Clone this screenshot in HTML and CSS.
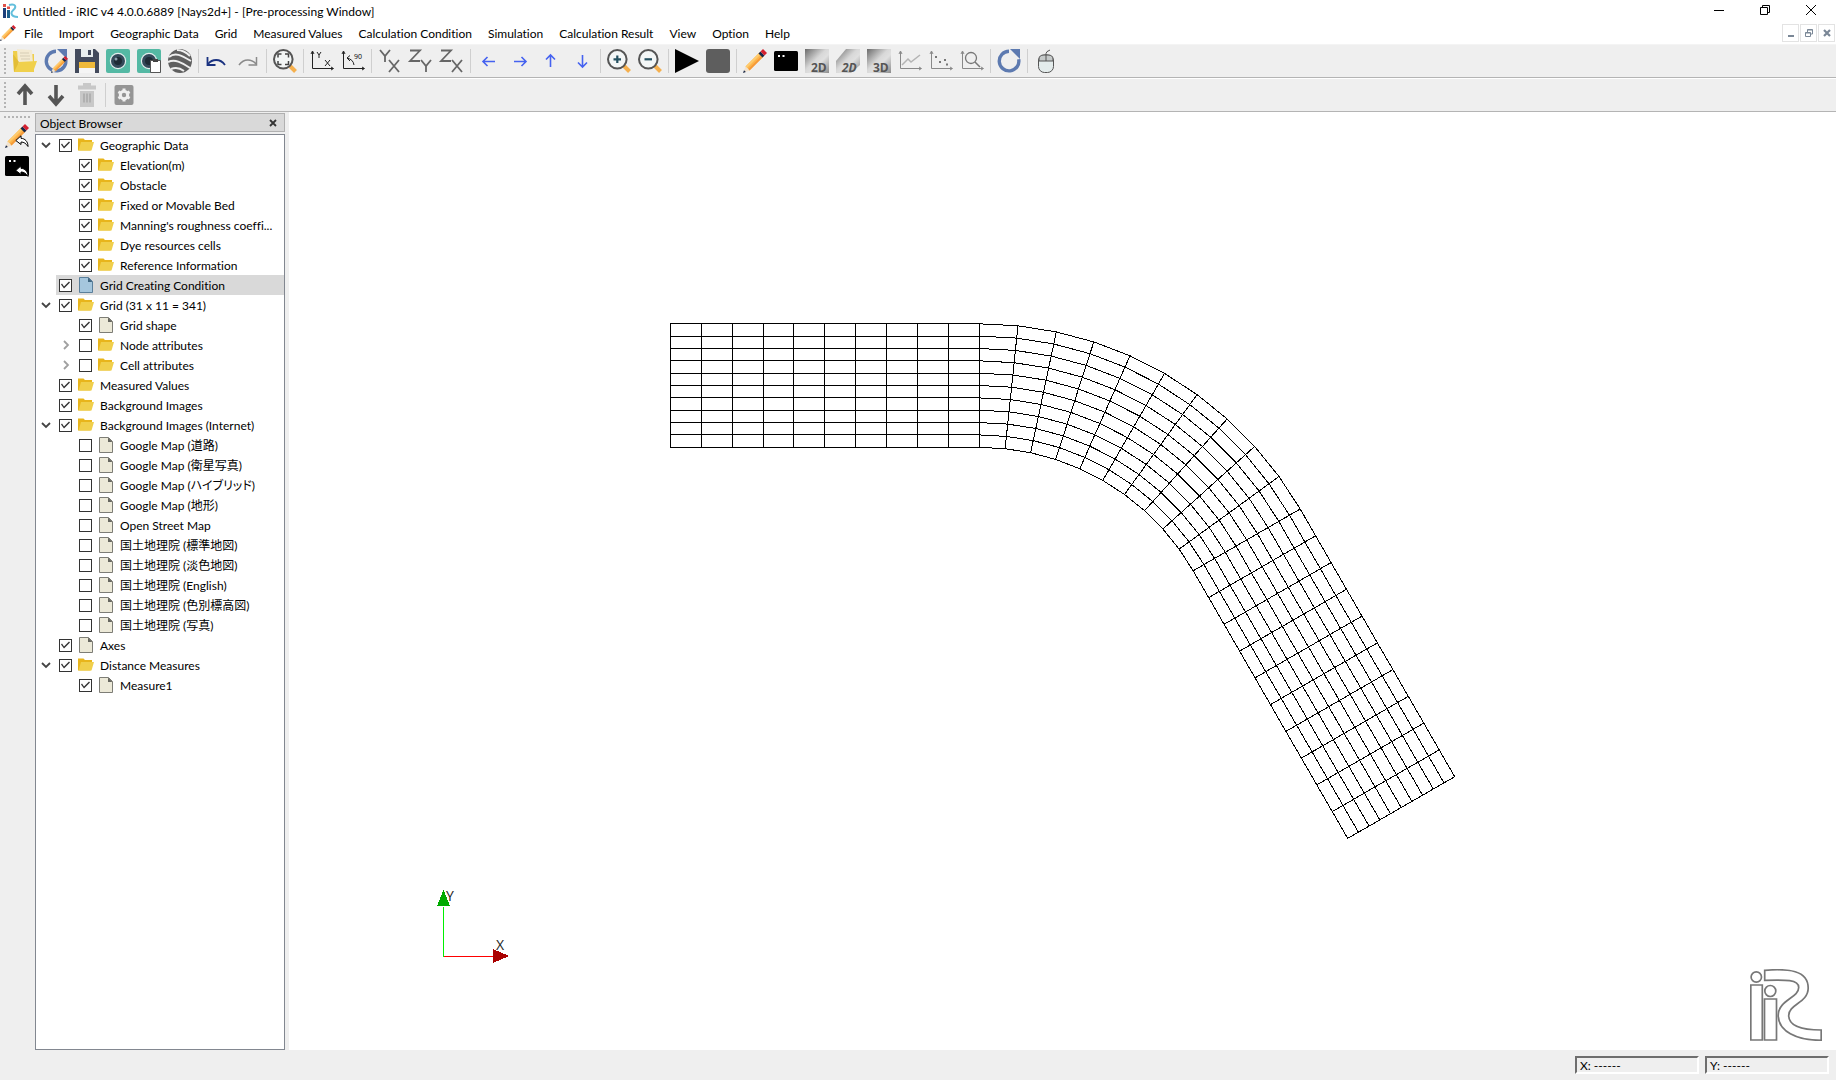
FILE: index.html
```html
<!DOCTYPE html>
<html lang="en">
<head>
    <meta charset="utf-8">
    <title>Untitled - iRIC v4 4.0.0.6889 [Nays2d+] - [Pre-processing Window]</title>
    <link rel="stylesheet" href="styles.css">
</head>
<body>
    <!-- Shared icon shapes -->
    <svg class="sprites" aria-hidden="true">
        <linearGradient id="silver" x1="0" y1="0" x2="1" y2="1">
            <stop offset="0" stop-color="#6a6a6a"/>
            <stop offset=".45" stop-color="#d8d8d8"/>
            <stop offset=".6" stop-color="#e0e0e0"/>
            <stop offset="1" stop-color="#8c8c8c"/>
        </linearGradient>
        <symbol id="folder" viewBox="0 0 16 16">
            <path d="M0 1.500h5.500l1.500 1.500h7v3H0z" fill="#e8b51c"/>
            <path d="M0 5v8.500h12.500L14 6z" fill="#e8b51c"/>
            <path d="M3 5h13L13.500 13.500H0.500z" fill="#f0cf4c"/>
        </symbol>
        <symbol id="page" viewBox="0 0 16 16">
            <path d="M1.500 .5h9l4 4v11h-13z" fill="#ece9d8" stroke="#7d7d76"/>
            <path d="M10 .5v4.500h4.500z" fill="#66665f"/>
        </symbol>
        <symbol id="bluepage" viewBox="0 0 16 16">
            <path d="M1.500 .5h9l4 4v11h-13z" fill="#a5c6dd" stroke="#5a7f9b"/>
            <path d="M10 .5v4.500h4.500z" fill="#3f6580"/>
        </symbol>
        <symbol id="down" viewBox="0 0 10 10">
            <path d="M1 3l4 4 4-4" fill="none" stroke="#444" stroke-width="1.800"/>
        </symbol>
        <symbol id="right" viewBox="0 0 10 10">
            <path d="M3 1l4 4-4 4" fill="none" stroke="#a0a0a0" stroke-width="1.800"/>
        </symbol>
        <symbol id="pencil" viewBox="0 0 24 24">
            <path d="M2.500 17.500L16.500 3.500l4 4L6.500 21.500z" fill="#fdb44b"/>
            <path d="M2.500 17.500L16.500 3.500l1.500 1.500L4 19z" fill="#fecb6e"/>
            <path d="M5.200 20.200l14-14 1.300 1.300-14 14z" fill="#f59a3a"/>
            <path d="M2.500 17.500l4 4L0 24z" fill="#f1e3cf"/>
            <path d="M1 21.200L0 24l2.900-1z" fill="#17284a"/>
            <path d="M15.500 4.500l2-2 4 4-2 2z" fill="#17284a"/>
            <path d="M17.500 2.500L20 0l4 4-2.500 2.500z" fill="#d4202f"/>
        </symbol>
        <symbol id="axes" viewBox="0 0 24 24">
            <path d="M2.500 3v16.500H23M1 5l1.500-3L4 5M21 18l2.500 1.500L21 21" fill="none" stroke="currentColor"/>
        </symbol>
        <symbol id="reply" viewBox="0 0 14 12">
            <path d="M6 .8L.8 5.500 6 9.500V7c3 0 5 1.500 7 4.500C13 6.500 10 3.500 6 3.300z" fill="#fff" stroke="#000"/>
        </symbol>
        <symbol id="console" viewBox="0 0 24 24">
            <rect y="2" width="24" height="20" rx="1.500"/>
            <path d="M4 6h2v2H4zM8.500 6h2v2h-2z" fill="#fff"/>
        </symbol>
        <symbol id="lens" viewBox="0 0 24 24">
            <path d="M16.500 16.500l6 6" stroke="#f5b04e" stroke-width="4"/>
            <circle cx="10.300" cy="10.300" r="9.300" fill="#f3f6f6" stroke="#555" stroke-width="2"/>
        </symbol>
        <symbol id="arrow" viewBox="0 0 24 24">
            <path d="M6 12.500h12M10.500 8L6 12.500l4.500 4.500" fill="none" stroke="#4562f0" stroke-width="1.600"/>
        </symbol>
        <symbol id="bigarrow" viewBox="0 0 24 24">
            <path d="M12 22V4M5 11l7-8 7 8" fill="none" stroke="#555" stroke-width="3.600"/>
        </symbol>
    </svg>

    <header class="titlebar">
        <svg class="app-icon" viewBox="0 0 16 16">
            <path d="M1 5h3v10H1z" fill="#1c3f7a"/>
            <path d="M5 7h3v8H5z" fill="#1c5f8c"/>
            <path d="M1 1h3v3H1zM5 3.500h3v2.500H5z" fill="#e0524a"/>
            <path d="M7 2c5-1.500 7 .5 6 3-1 2-4 3-3.500 5.500.5 2.500 3 3.500 6.500 3.500" fill="none" stroke="#63bfdc" stroke-width="2"/>
        </svg>
        <h1 class="title">Untitled - iRIC v4 4.0.0.6889 [Nays2d+] - [Pre-processing Window]</h1>
        <div class="window-buttons">
            <button aria-label="Minimize"><svg viewBox="0 0 10 10"><path d="M0 5.500h10" stroke="#000"/></svg></button>
            <button aria-label="Restore"><svg viewBox="0 0 10 10"><path d="M.5 2.500h7v7h-7zM2.500 2.500v-2h7v7h-2" fill="none" stroke="#000"/></svg></button>
            <button aria-label="Close"><svg viewBox="0 0 10 10"><path d="M0 0l10 10M10 0L0 10" stroke="#000"/></svg></button>
        </div>
    </header>

    <nav class="menubar">
        <svg class="mdi-icon"><use href="#pencil"/></svg>
        <div class="menus">
            <button>File</button>
            <button>Import</button>
            <button>Geographic Data</button>
            <button>Grid</button>
            <button>Measured Values</button>
            <button>Calculation Condition</button>
            <button>Simulation</button>
            <button>Calculation Result</button>
            <button>View</button>
            <button>Option</button>
            <button>Help</button>
        </div>
        <div class="mdi-buttons">
            <button aria-label="Minimize window"><svg viewBox="0 0 8 8"><path d="M1 6h6v2H1z" fill="#7a8796"/></svg></button>
            <button aria-label="Restore window"><svg viewBox="0 0 8 8"><path d="M.5 3.500h5v4h-5zM.5 4h5M2.500 3V.5h5v4.500H6M2.500 1h5" fill="none" stroke="#7a8796"/></svg></button>
            <button aria-label="Close window"><svg viewBox="0 0 8 8"><path d="M1 1l6 6M7 1L1 7" stroke="#7a8796" stroke-width="2.200"/></svg></button>
        </div>
    </nav>

    <div class="toolbar">
        <span class="handle"></span>
        <button aria-label="Open">
            <svg viewBox="0 0 24 24"><path d="M0 2h7l2 3h12v18H1z" fill="#efce4a"/><path d="M4 0l15 1 1 14H5z" fill="#f3ead2"/><path d="M7 4h9M7 7h10M8 10h9" stroke="#d6cdb5"/><path d="M6 13l18-1-4 11H1z" fill="#f0d04c"/><path d="M1 23l5-10-6-8z" fill="#e3bd35"/></svg>
        </button>
        <button aria-label="Reopen">
            <svg viewBox="0 0 24 24"><path d="M12 2.300a9.800 9.800 0 1 0 9.700 8" fill="none" stroke="#5d7ab0" stroke-width="3.400"/><path d="M13 0h10v10z" fill="#5d7ab0"/><use href="#pencil" x="7" y="7" width="17" height="17"/></svg>
        </button>
        <button aria-label="Save">
            <svg viewBox="0 0 24 24"><path d="M0 0h20l4 4v20H0z" fill="#434a5c"/><path d="M6 0h12v8H6z" fill="#e8edee"/><path d="M13 1h3v5h-3z" fill="#434a5c"/><path d="M4 13h16v11H4z" fill="#f5f5f5"/><path d="M4 13h16v6H4z" fill="#efb93a"/></svg>
        </button>
        <button aria-label="Snapshot">
            <svg viewBox="0 0 24 24"><rect width="24" height="24" rx="2" fill="#54b9a4"/><circle cx="12" cy="12" r="8.200" fill="#e4eeee"/><circle cx="12" cy="12" r="7" fill="#34495a"/><circle cx="12" cy="12" r="4" fill="#1e2b36"/><circle cx="10" cy="10" r="1.500" fill="#8da0ad"/></svg>
        </button>
        <button aria-label="Copy snapshot">
            <svg viewBox="0 0 24 24"><rect width="24" height="24" rx="2" fill="#54b9a4"/><circle cx="12" cy="12" r="8.200" fill="#e4eeee"/><circle cx="12" cy="12" r="7" fill="#34495a"/><circle cx="12" cy="12" r="4" fill="#1e2b36"/><path d="M13.500 11.500h10v12h-10z" fill="#fff" stroke="#555"/><path d="M16 10h5v3h-5z" fill="#444"/></svg>
        </button>
        <button aria-label="Google Earth">
            <svg viewBox="0 0 24 24"><circle cx="12" cy="12" r="12" fill="#5f5f5f"/><path d="M1 8c6-5 12-2 22 4M0 13c7-3 13 0 22 6M3 20c5-2 9-1 13 2M9 1c5 0 9 2 13 6" fill="none" stroke="#efefef" stroke-width="2"/></svg>
        </button>
        <span class="separator"></span>
        <button aria-label="Undo">
            <svg viewBox="0 0 24 24"><path d="M3 15c4-5 12-6 17 1" fill="none" stroke="#1a3280" stroke-width="1.800"/><path d="M2.500 8v8h8" fill="none" stroke="#1a3280" stroke-width="1.800"/></svg>
        </button>
        <button aria-label="Redo">
            <svg viewBox="0 0 24 24"><path d="M20 15c-4-5-12-6-17 1" fill="none" stroke="#8a8a8a" stroke-width="1.500"/><path d="M20.500 8v8h-8" fill="none" stroke="#8a8a8a" stroke-width="1.500"/></svg>
        </button>
        <span class="separator"></span>
        <button aria-label="Fit">
            <svg viewBox="0 0 24 24"><use href="#lens"/><path d="M5 8.500V5h3.500M12 5h3.500v3.500M15.500 12v3.500H12M8.500 15.500H5V12" fill="none" stroke="#444" stroke-width="1.500"/></svg>
        </button>
        <span class="separator"></span>
        <button aria-label="Reset rotation" class="dark">
            <svg viewBox="0 0 24 24"><use href="#axes"/><path d="M7 3l2 3 2-3M9 6v3M15 11l5 6M20 11l-5 6" fill="none" stroke="#222"/></svg>
        </button>
        <button aria-label="Rotate 90 degrees" class="dark">
            <svg viewBox="0 0 24 24"><use href="#axes"/><path d="M13 16c-.5-4-3-6-7-7M9 6.500L6 9l3 3" fill="none" stroke="#222"/><text x="13" y="10" class="tiny">90</text></svg>
        </button>
        <span class="separator"></span>
        <button aria-label="XY plane">
            <svg class="plane" viewBox="0 0 24 24"><path d="M2 1l5 6 5-6M7 7v6M11 11l10 12M21 11L11 23"/></svg>
        </button>
        <button aria-label="YZ plane">
            <svg class="plane" viewBox="0 0 24 24"><path d="M1 1.500h10L1 12h10M12 11l5 6 5-6M17 17v6"/></svg>
        </button>
        <button aria-label="XZ plane">
            <svg class="plane" viewBox="0 0 24 24"><path d="M1 1.500h10L1 12h10M12 11l10 12M22 11L12 23"/></svg>
        </button>
        <span class="separator"></span>
        <button aria-label="Move left"><svg viewBox="0 0 24 24"><use href="#arrow"/></svg></button>
        <button aria-label="Move right"><svg viewBox="0 0 24 24"><use href="#arrow" transform="matrix(-1 0 0 1 24 0)"/></svg></button>
        <button aria-label="Move up"><svg viewBox="0 0 24 24"><use href="#arrow" transform="rotate(90 12 12)"/></svg></button>
        <button aria-label="Move down"><svg viewBox="0 0 24 24"><use href="#arrow" transform="rotate(-90 12 12)"/></svg></button>
        <span class="separator"></span>
        <button aria-label="Zoom in"><svg viewBox="0 0 24 24"><use href="#lens"/><path d="M6.500 10.300H14M10.300 6.500V14" stroke="#245060" stroke-width="2.200"/></svg></button>
        <button aria-label="Zoom out"><svg viewBox="0 0 24 24"><use href="#lens"/><path d="M6.500 10.300H14" stroke="#245060" stroke-width="2.200"/></svg></button>
        <span class="separator"></span>
        <button aria-label="Run"><svg viewBox="0 0 24 24"><path d="M0 0l24 12L0 24z"/></svg></button>
        <button aria-label="Stop"><svg viewBox="0 0 24 24"><rect width="24" height="24" rx="3" fill="#5e5e5e"/></svg></button>
        <span class="separator"></span>
        <button aria-label="Pre-processing window"><svg><use href="#pencil"/></svg></button>
        <button aria-label="Solver console"><svg><use href="#console"/></svg></button>
        <button aria-label="2D post-processing window">
            <svg viewBox="0 0 24 24"><path d="M0 0h24v24H0z" fill="url(#silver)"/><text x="6" y="23" class="dim">2D</text></svg>
        </button>
        <button aria-label="2D bird's-eye window">
            <svg viewBox="0 0 24 24"><path d="M10 0h14v16l-9 8H0V12z" fill="url(#silver)"/><text x="6" y="23" class="dim slanted">2D</text></svg>
        </button>
        <button aria-label="3D post-processing window">
            <svg viewBox="0 0 24 24"><path d="M0 0h24v24H0z" fill="url(#silver)"/><text x="6" y="23" class="dim">3D</text></svg>
        </button>
        <button aria-label="Graph window" class="gray">
            <svg viewBox="0 0 24 24"><use href="#axes"/><path d="M4 16l6-6 3 3 9-7" fill="none" stroke="#b4b4b4" stroke-width="1.500"/></svg>
        </button>
        <button aria-label="Scattered chart" class="gray">
            <svg viewBox="0 0 24 24"><use href="#axes"/><path d="M6 7h2v2H6zM10 12h2v2h-2zM15 10h2v2h-2zM17 14.500h2v2h-2z" fill="#777"/></svg>
        </button>
        <button aria-label="Verification" class="gray">
            <svg viewBox="0 0 24 24"><use href="#axes"/><circle cx="11" cy="9" r="5.500" fill="none" stroke="#777" stroke-width="1.300"/><path d="M15 13l5 5" stroke="#777" stroke-width="1.500"/></svg>
        </button>
        <span class="separator"></span>
        <button aria-label="Reload">
            <svg viewBox="0 0 24 24"><path d="M12 2.300a9.800 9.800 0 1 0 9.700 8" fill="none" stroke="#5d7ab0" stroke-width="3.400"/><path d="M13 0h10v10z" fill="#5d7ab0"/></svg>
        </button>
        <span class="separator"></span>
        <button aria-label="Mouse hint">
            <svg viewBox="0 0 24 24"><rect x="4.500" y="6" width="15" height="17.500" rx="6" fill="#e4ecec" stroke="#555"/><path d="M5 12V10q0-4 5-4h4q5 0 5 4v2z" fill="#c5c9c9" stroke="#555"/><path d="M12 12V4.500q0-2 4-3.500" fill="none" stroke="#555"/></svg>
        </button>
    </div>

    <div class="toolbar">
        <span class="handle"></span>
        <button aria-label="Move item up"><svg><use href="#bigarrow"/></svg></button>
        <button aria-label="Move item down"><svg viewBox="0 0 24 24"><use href="#bigarrow" transform="rotate(180 12 12)"/></svg></button>
        <button aria-label="Delete">
            <svg viewBox="0 0 24 24"><path d="M3 2.500h18v4H3zM8 0h8v3H8zM5 8h14v16H5z" fill="#c8c8c8"/><path d="M9 10.500v9M12 10.500v9M15 10.500v9" stroke="#a8a8a8" stroke-width="1.500"/></svg>
        </button>
        <span class="separator"></span>
        <button aria-label="Properties">
            <svg viewBox="0 0 24 24"><rect x="2.500" y="2" width="19" height="20" rx="2" fill="#959595"/><circle cx="12" cy="12" r="3.700" fill="none" stroke="#efefef" stroke-width="3"/><path d="M12 5.500v2M12 16.500v2M6.400 8.700l1.700 1M15.900 14.300l1.700 1M17.600 8.700l-1.700 1M8.100 14.300l-1.700 1" stroke="#efefef" stroke-width="3"/></svg>
        </button>
    </div>

    <main class="workspace">
        <div class="side-toolbar">
            <span class="handle-h"></span>
            <button aria-label="Back to pre-processing window">
                <svg viewBox="0 0 24 24"><use href="#pencil"/><use href="#reply" x="10" y="11" width="14" height="12"/></svg>
            </button>
            <button aria-label="Back to solver console">
                <svg viewBox="0 0 24 24"><use href="#console"/><use href="#reply" x="10" y="11" width="14" height="12"/></svg>
            </button>
        </div>

        <section class="browser">
            <div class="browser-title">
                <h2>Object Browser</h2>
                <button aria-label="Close Object Browser"><svg viewBox="0 0 8 8"><path d="M1 1l6 6M7 1L1 7" stroke="#333" stroke-width="1.800"/></svg></button>
            </div>
            <ul class="tree">
                <li>
                    <div class="row"><button aria-label="Collapse"><svg><use href="#down"/></svg></button><label><input type="checkbox" checked><svg><use href="#folder"/></svg><span>Geographic Data</span></label></div>
                    <ul>
                        <li class="row"><label><input type="checkbox" checked><svg><use href="#folder"/></svg><span>Elevation(m)</span></label></li>
                        <li class="row"><label><input type="checkbox" checked><svg><use href="#folder"/></svg><span>Obstacle</span></label></li>
                        <li class="row"><label><input type="checkbox" checked><svg><use href="#folder"/></svg><span>Fixed or Movable Bed</span></label></li>
                        <li class="row"><label><input type="checkbox" checked><svg><use href="#folder"/></svg><span>Manning's roughness coeffi...</span></label></li>
                        <li class="row"><label><input type="checkbox" checked><svg><use href="#folder"/></svg><span>Dye resources cells</span></label></li>
                        <li class="row"><label><input type="checkbox" checked><svg><use href="#folder"/></svg><span>Reference Information</span></label></li>
                    </ul>
                </li>
                <li class="row"><label class="selected"><input type="checkbox" checked><svg><use href="#bluepage"/></svg><span>Grid Creating Condition</span></label></li>
                <li>
                    <div class="row"><button aria-label="Collapse"><svg><use href="#down"/></svg></button><label><input type="checkbox" checked><svg><use href="#folder"/></svg><span>Grid (31 x 11 = 341)</span></label></div>
                    <ul>
                        <li class="row"><label><input type="checkbox" checked><svg><use href="#page"/></svg><span>Grid shape</span></label></li>
                        <li class="row"><button aria-label="Expand"><svg><use href="#right"/></svg></button><label><input type="checkbox"><svg><use href="#folder"/></svg><span>Node attributes</span></label></li>
                        <li class="row"><button aria-label="Expand"><svg><use href="#right"/></svg></button><label><input type="checkbox"><svg><use href="#folder"/></svg><span>Cell attributes</span></label></li>
                    </ul>
                </li>
                <li class="row"><label><input type="checkbox" checked><svg><use href="#folder"/></svg><span>Measured Values</span></label></li>
                <li class="row"><label><input type="checkbox" checked><svg><use href="#folder"/></svg><span>Background Images</span></label></li>
                <li>
                    <div class="row"><button aria-label="Collapse"><svg><use href="#down"/></svg></button><label><input type="checkbox" checked><svg><use href="#folder"/></svg><span>Background Images (Internet)</span></label></div>
                    <ul>
                        <li class="row"><label><input type="checkbox"><svg><use href="#page"/></svg><span lang="ja">Google Map (道路)</span></label></li>
                        <li class="row"><label><input type="checkbox"><svg><use href="#page"/></svg><span lang="ja">Google Map (衛星写真)</span></label></li>
                        <li class="row"><label><input type="checkbox"><svg><use href="#page"/></svg><span lang="ja">Google Map (ハイブリッド)</span></label></li>
                        <li class="row"><label><input type="checkbox"><svg><use href="#page"/></svg><span lang="ja">Google Map (地形)</span></label></li>
                        <li class="row"><label><input type="checkbox"><svg><use href="#page"/></svg><span>Open Street Map</span></label></li>
                        <li class="row"><label><input type="checkbox"><svg><use href="#page"/></svg><span lang="ja">国土地理院 (標準地図)</span></label></li>
                        <li class="row"><label><input type="checkbox"><svg><use href="#page"/></svg><span lang="ja">国土地理院 (淡色地図)</span></label></li>
                        <li class="row"><label><input type="checkbox"><svg><use href="#page"/></svg><span lang="ja">国土地理院 (English)</span></label></li>
                        <li class="row"><label><input type="checkbox"><svg><use href="#page"/></svg><span lang="ja">国土地理院 (色別標高図)</span></label></li>
                        <li class="row"><label><input type="checkbox"><svg><use href="#page"/></svg><span lang="ja">国土地理院 (写真)</span></label></li>
                    </ul>
                </li>
                <li class="row"><label><input type="checkbox" checked><svg><use href="#page"/></svg><span>Axes</span></label></li>
                <li>
                    <div class="row"><button aria-label="Collapse"><svg><use href="#down"/></svg></button><label><input type="checkbox" checked><svg><use href="#folder"/></svg><span>Distance Measures</span></label></div>
                    <ul>
                        <li class="row"><label><input type="checkbox" checked><svg><use href="#page"/></svg><span>Measure1</span></label></li>
                    </ul>
                </li>
            </ul>
        </section>

        <section class="view">
            <svg class="scene">
                <path id="mesh" class="mesh"/>
                <g class="axis">
                    <path d="M154.500 795v49.500" stroke="#00f000"/>
                    <path d="M154.500 844.500H204" stroke="#f00"/>
                    <path d="M154.500 778l6.500 16h-13z" fill="#00aa00"/>
                    <path d="M220 844l-16-7v14z" fill="#aa0000"/>
                    <text x="157" y="789">Y</text>
                    <text x="207" y="838">X</text>
                </g>
            </svg>
            <svg class="logo" viewBox="0 0 72 72">
                <circle cx="6.300" cy="8" r="5.200"/>
                <circle cx="20.300" cy="22" r="5.500"/>
                <path d="M.8 16h11.500v55H.8zM14.500 30h12v41h-12z"/>
                <path d="M14.700 1.300C38-.5 58.200 1 58.200 19 58.200 34 38.700 35 38.700 46.500 38.700 58 54 61 71.200 61v10.300C46 71.300 28.500 62 28.200 46.500 28.200 31 48.700 29 48.700 18.500 48.700 10.500 36 10.700 14.700 11.300z"/>
            </svg>
        </section>
    </main>

    <footer class="statusbar">
        <span class="field">X: ------</span>
        <span class="field">Y: ------</span>
    </footer>

    <script src="script.js"></script>
</body>
</html>
```
FILE: styles.css
```css
* {
    box-sizing: border-box;
}

body {
    display: flex;
    flex-direction: column;
    height: 100vh;
    margin: 0;
    overflow: hidden;
    background-color: #efefef;
    color: #000;
    font: 12px/20px Lato, "Noto Sans CJK JP", sans-serif;
    font-variant-ligatures: none;
}

button {
    display: flex;
    align-items: center;
    justify-content: center;
    padding: 0;
    border: 0;
    background: none;
    color: inherit;
    font: inherit;
    font-variant-ligatures: none;
}

.sprites {
    position: absolute;
    width: 0;
    height: 0;
}

/* Title bar */
.titlebar {
    display: flex;
    align-items: center;
    height: 22px;
    padding: 0 2px;
    background-color: #fff;
}

.app-icon {
    width: 16px;
    height: 16px;
}

.title {
    flex: 1;
    margin: 2px 0 0 5px;
    font-size: 12px;
    font-weight: normal;
}

.window-buttons {
    display: flex;
    height: 20px;
    align-self: flex-start;
}

.window-buttons button {
    width: 46px;
}

.window-buttons svg {
    width: 10px;
    height: 10px;
}

/* Menu bar */
.menubar {
    display: flex;
    align-items: center;
    height: 23px;
    border-bottom: 1px solid #f4f4f4;
    background-color: #fff;
}

.mdi-icon {
    width: 16px;
    height: 16px;
}

.menus {
    display: flex;
    flex: 1;
}

.menus button {
    padding: 2px 8px 0;
}

.mdi-buttons {
    display: flex;
    gap: 1px;
    padding-right: 1px;
}

.mdi-buttons button {
    width: 17px;
    height: 18px;
    border: 1px solid #e3e3e3;
}

.mdi-buttons svg {
    width: 8px;
    height: 8px;
}

/* Toolbars */
.toolbar {
    display: flex;
    align-items: center;
    gap: 1px;
    height: 33px;
    padding-left: 4px;
    border-bottom: 1px solid #b4b4b4;
}

.toolbar + .toolbar {
    height: 34px;
    border-top: 1px solid #fff;
}

.toolbar button {
    width: 30px;
    height: 30px;
}

.toolbar svg,
.side-toolbar svg {
    width: 24px;
    height: 24px;
    overflow: visible;
}

.handle {
    width: 2px;
    height: 26px;
    margin-right: 3px;
    background: repeating-linear-gradient(#b4b4b4 0 2px, transparent 2px 4px);
}

.separator {
    width: 1px;
    height: 24px;
    margin: 0 2px;
    background-color: #cfcfcf;
}

.dark {
    color: #222;
}

.gray {
    color: #888;
}

.tiny {
    font: 7px "Open Sans", sans-serif;
}

.dim {
    fill: #555;
    font: bold 12px "Open Sans", sans-serif;
}

.slanted {
    font-style: italic;
}

.plane {
    fill: none;
    stroke: #666;
    stroke-width: 1.8;
}

/* Workspace */
.workspace {
    display: flex;
    flex: 1;
    min-height: 0;
}

.side-toolbar {
    display: flex;
    flex-direction: column;
    align-items: center;
    gap: 6px;
    width: 35px;
    padding: 4px 1px 0 0;
}

.handle-h {
    width: 26px;
    height: 2px;
    background: repeating-linear-gradient(90deg, #b4b4b4 0 2px, transparent 2px 4px);
}

.browser {
    display: flex;
    flex-direction: column;
    gap: 2px;
    width: 250px;
    margin-right: 4px;
    padding-top: 1px;
}

.browser-title {
    display: flex;
    align-items: center;
    justify-content: space-between;
    height: 19px;
    padding: 0 7px 0 4px;
    border: 1px solid #b0b0b0;
    background-color: #d9d9d9;
}

.browser-title h2 {
    margin: 2px 0 0;
    font-size: 12px;
    font-weight: normal;
}

.browser-title svg {
    width: 8px;
    height: 8px;
}

.tree {
    flex: 1;
    border: 1px solid #828790;
    background-color: #fff;
}

.tree,
.tree ul {
    margin: 0;
    padding: 0;
    list-style: none;
}

.tree ul {
    padding-left: 20px;
}

.row {
    display: flex;
    height: 20px;
    padding-left: 20px;
}

.row button {
    width: 20px;
    margin-left: -20px;
}

.row button svg {
    width: 10px;
    height: 10px;
}

.row label {
    display: flex;
    flex: 1;
    align-items: center;
    gap: 6px;
    padding-left: 3px;
    white-space: nowrap;
}

.row label svg {
    width: 16px;
    height: 16px;
}

.row label span {
    margin-top: 2px;
}

.row :lang(ja) {
    font-feature-settings: "palt";
}

.selected {
    background-color: #d9d9d9;
}

.row input {
    width: 13px;
    height: 13px;
    margin: 0;
    border: 1px solid #333;
    background-color: #fff;
    appearance: none;
}

.row input:checked::before {
    content: "";
    display: block;
    height: 11px;
    background-color: #333;
    clip-path: polygon(1px 5px, 2px 4px, 4px 7px, 9px 2px, 10px 3px, 4px 9px);
}

/* Drawing area */
.view {
    position: relative;
    flex: 1;
    background-color: #fff;
}

.scene {
    display: block;
    width: 100%;
    height: 100%;
}

.mesh {
    fill: none;
    stroke: #000;
    shape-rendering: crispEdges;
}

.axis path {
    shape-rendering: crispEdges;
}

.axis text {
    fill: #222;
    font: 14px "Open Sans", sans-serif;
}

.logo {
    position: absolute;
    right: 14px;
    bottom: 9px;
    width: 72px;
    height: 72px;
    fill: #fff;
    stroke: #777;
    stroke-width: 1.7;
}

/* Status bar */
.statusbar {
    display: flex;
    align-items: center;
    justify-content: flex-end;
    gap: 6px;
    height: 30px;
    padding-right: 7px;
}

.field {
    width: 124px;
    height: 18px;
    padding-left: 3px;
    border: 2px solid;
    border-color: #6e6e6e #fff #fff #6e6e6e;
    line-height: 15px;
}
```
FILE: script.js
```javascript
/* Channel mesh: straight reach, 60 degree bend, straight reach */
const step = 30.9;
const rowGap = 12.35;
const start = { x: 381.3, y: 211.8 };
const outerRadius = 370.5;
const bend = Math.PI / 3;

/* Position of node i along the channel and j across it */
function node(i, j) {
    const r = outerRadius - j * rowGap;
    const cx = start.x + 10 * step;
    const cy = start.y + outerRadius;
    if (i <= 10) return [start.x + i * step, cy - r];
    const angle = Math.min(i - 10, 10) / 10 * bend;
    const rest = Math.max(i - 20, 0) * step;
    return [
        cx + r * Math.sin(angle) + rest * Math.cos(angle),
        cy - r * Math.cos(angle) + rest * Math.sin(angle)
    ];
}

function line(points) {
    return "M" + points.map(p => p[0].toFixed(1) + " " + p[1].toFixed(1)).join("L");
}

let d = "";
for (let j = 0; j <= 10; j++) {
    d += line(Array.from({ length: 31 }, (_, i) => node(i, j)));
}
for (let i = 0; i <= 30; i++) {
    d += line(Array.from({ length: 11 }, (_, j) => node(i, j)));
}
document.querySelector("#mesh").setAttribute("d", d);
```
